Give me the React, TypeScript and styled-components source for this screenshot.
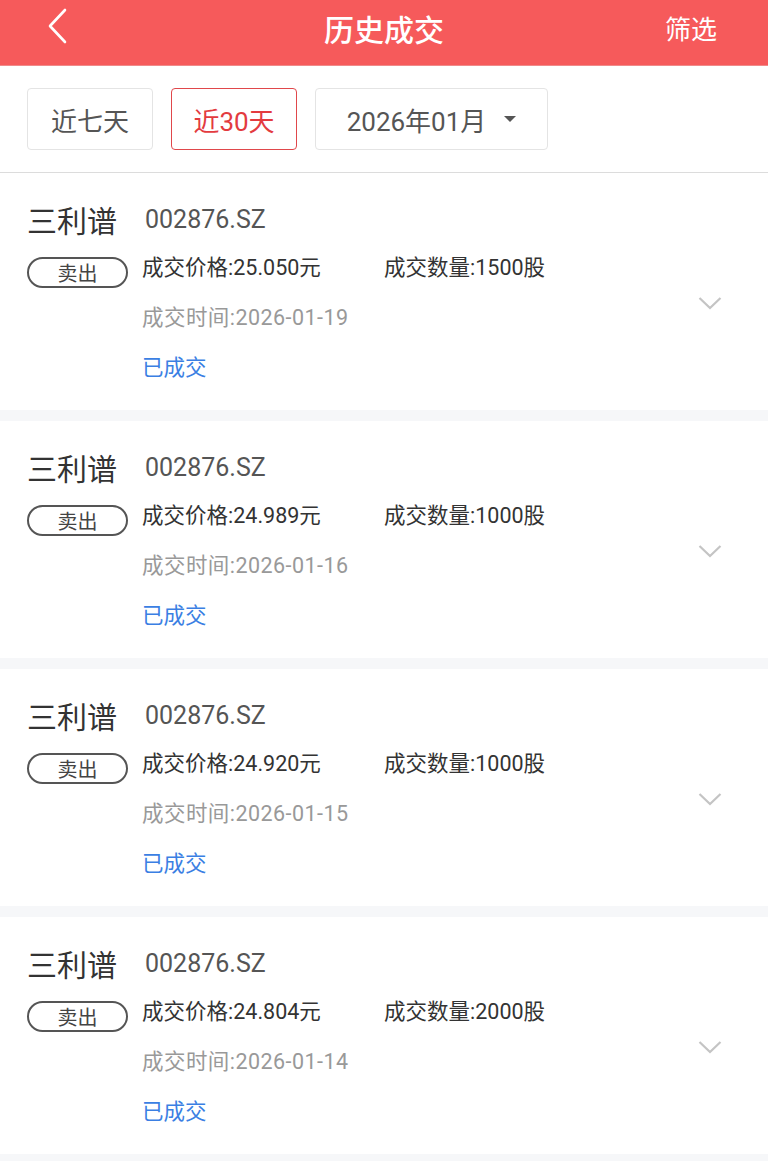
import styled, { createGlobalStyle } from "styled-components";

const GlobalStyle = createGlobalStyle`
  html, body {
    margin: 0;
    padding: 0;
    background: #f6f7f9;
    font-family: Roboto, "Noto Sans CJK SC", sans-serif;
  }
  * { box-sizing: border-box; }
`;

const Page = styled.div`
  width: 768px;
  min-height: 1161px;
  background: #f6f7f9;
`;

const Header = styled.header`
  height: 66px;
  background: #f65a5b;
  display: grid;
  grid-template-columns: 120px 1fr 120px;
  align-items: center;
  color: #fff;
  border-bottom: 1px solid #f08a8a;
`;

const BackBtn = styled.div`
  display: flex;
  align-items: center;
  padding-left: 47px;
  margin-top: -14px;
`;

const Title = styled.h1`
  margin: 0;
  text-align: center;
  font-size: 30px;
  font-weight: 500;
  margin-top: -10px;
`;

const FilterLink = styled.div`
  text-align: right;
  padding-right: 51px;
  font-size: 26px;
  margin-top: -10px;
`;

const FilterBar = styled.div`
  height: 107px;
  background: #fff;
  display: flex;
  align-items: center;
  gap: 18px;
  padding: 0 27px;
  border-bottom: 1px solid #dcdcdc;
`;

const Chip = styled.div<{ $active?: boolean; $w: number }>`
  width: ${(p) => p.$w}px;
  height: 62px;
  border: 1px solid ${(p) => (p.$active ? "#e0474b" : "#e4e4e4")};
  border-radius: 4px;
  display: flex;
  align-items: center;
  justify-content: center;
  gap: 18px;
  font-size: 26px;
  color: ${(p) => (p.$active ? "#e33b3f" : "#555")};
`;

const Caret = styled.span`
  width: 0;
  height: 0;
  border-left: 6px solid transparent;
  border-right: 6px solid transparent;
  border-top: 6px solid #555;
`;

const List = styled.div`
  display: flex;
  flex-direction: column;
  gap: 11px;
`;

const Card = styled.div`
  height: 237px;
  background: #fff;
  display: flex;
  padding: 26px 0 0 27px;
`;

const Main = styled.div`
  flex: 1;
`;

const NameRow = styled.div`
  display: flex;
  align-items: center;
  height: 40px;
  gap: 28px;
`;

const Name = styled.span`
  font-size: 30px;
  color: #333;
`;

const Code = styled.span`
  font-size: 25px;
  color: #555;
`;

const Body = styled.div`
  display: flex;
  margin-top: 4px;
`;

const Badge = styled.div`
  width: 101px;
  height: 31px;
  margin-top: 14px;
  margin-right: 14px;
  border: 2px solid #555;
  border-radius: 16px;
  display: flex;
  align-items: center;
  justify-content: center;
  font-size: 20px;
  color: #444;
`;

const Info = styled.div`
  display: flex;
  flex-direction: column;
`;

const Line = styled.div<{ $color: string; $spacing?: number }>`
  height: 50px;
  line-height: 50px;
  font-size: 21.5px;
  letter-spacing: ${(p) => p.$spacing ?? 0}px;
  color: ${(p) => p.$color};
  display: flex;
`;

const Field = styled.span`
  width: 242px;
`;

const Arrow = styled.div`
  width: 96px;
  align-self: center;
  margin-top: -4px;
  display: flex;
  padding-left: 26px;
`;

const trades = [
  { price: "25.050", qty: "1500", date: "2026-01-19" },
  { price: "24.989", qty: "1000", date: "2026-01-16" },
  { price: "24.920", qty: "1000", date: "2026-01-15" },
  { price: "24.804", qty: "2000", date: "2026-01-14" },
];

export default function App() {
  return (
    <Page>
      <GlobalStyle />
      <Header>
        <BackBtn>
          <svg width="22" height="36" viewBox="0 0 22 36">
            <path d="M18 2 L3 18 L18 34" fill="none" stroke="#fff" strokeWidth="2.6" strokeLinecap="round" strokeLinejoin="round" />
          </svg>
        </BackBtn>
        <Title>历史成交</Title>
        <FilterLink>筛选</FilterLink>
      </Header>
      <FilterBar>
        <Chip $w={126}>近七天</Chip>
        <Chip $w={126} $active>近30天</Chip>
        <Chip $w={233}>
          2026年01月
          <Caret />
        </Chip>
      </FilterBar>
      <List>
        {trades.map((t) => (
          <Card key={t.date}>
            <Main>
              <NameRow>
                <Name>三利谱</Name>
                <Code>002876.SZ</Code>
              </NameRow>
              <Body>
                <Badge>卖出</Badge>
                <Info>
                  <Line $color="#333">
                    <Field>成交价格:{t.price}元</Field>
                    <span>成交数量:{t.qty}股</span>
                  </Line>
                  <Line $color="#999" $spacing={0.45}>成交时间:{t.date}</Line>
                  <Line $color="#3b7fe3">已成交</Line>
                </Info>
              </Body>
            </Main>
            <Arrow>
              <svg width="24" height="14" viewBox="0 0 24 14">
                <path d="M1.5 2 L12 12 L22.5 2" fill="none" stroke="#c4c4c4" strokeWidth="2.2" />
              </svg>
            </Arrow>
          </Card>
        ))}
      </List>
    </Page>
  );
}
